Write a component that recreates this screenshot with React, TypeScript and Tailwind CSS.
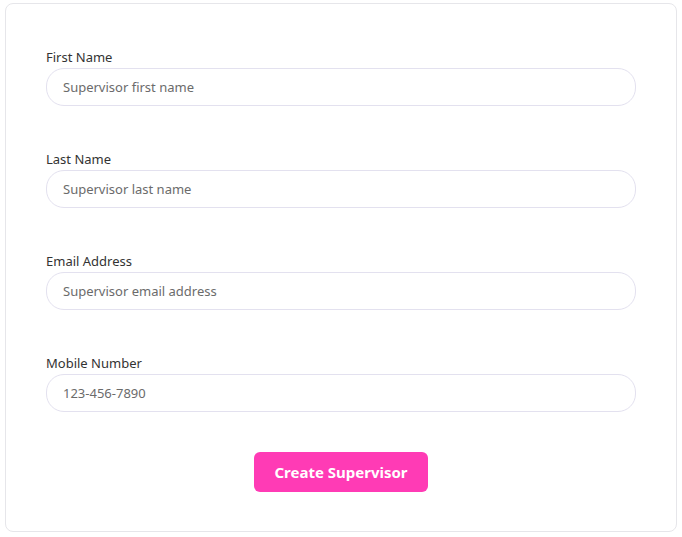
import { useState } from "react";

const fields = [
  { id: "first", label: "First Name", placeholder: "Supervisor first name", type: "text" },
  { id: "last", label: "Last Name", placeholder: "Supervisor last name", type: "text" },
  { id: "email", label: "Email Address", placeholder: "Supervisor email address", type: "email" },
  { id: "mobile", label: "Mobile Number", placeholder: "123-456-7890", type: "tel" },
];

const App = () => {
  const [values, setValues] = useState<Record<string, string>>({});

  return (
    <div className="min-h-screen bg-white px-[5px] pt-[3px] pb-[5px] font-['Noto_Sans',sans-serif]">
      <div className="rounded-lg border border-[#e6e6ea] bg-white px-10 pt-[43px] pb-[39px]">
        <form className="flex flex-col gap-[43px]" onSubmit={(e) => e.preventDefault()}>
          {fields.map((f) => (
            <div key={f.id} className="flex flex-col gap-px">
              <label htmlFor={f.id} className="text-[13px] leading-5 text-[#333333]">
                {f.label}
              </label>
              <input
                id={f.id}
                type={f.type}
                placeholder={f.placeholder}
                value={values[f.id] ?? ""}
                onChange={(e) => setValues({ ...values, [f.id]: e.target.value })}
                className="h-[38px] w-full rounded-[18px] border border-[#e3e1ef] bg-white px-4 text-[13px] text-[#333] placeholder:text-[#6b6b6b] focus:outline-none"
              />
            </div>
          ))}
        </form>
        <div className="mt-10 flex justify-center">
          <button
            type="button"
            className="h-10 w-[174px] rounded-md bg-[#ff3bb5] text-[15px] font-bold text-white"
          >
            Create Supervisor
          </button>
        </div>
      </div>
    </div>
  );
};

export default App;
